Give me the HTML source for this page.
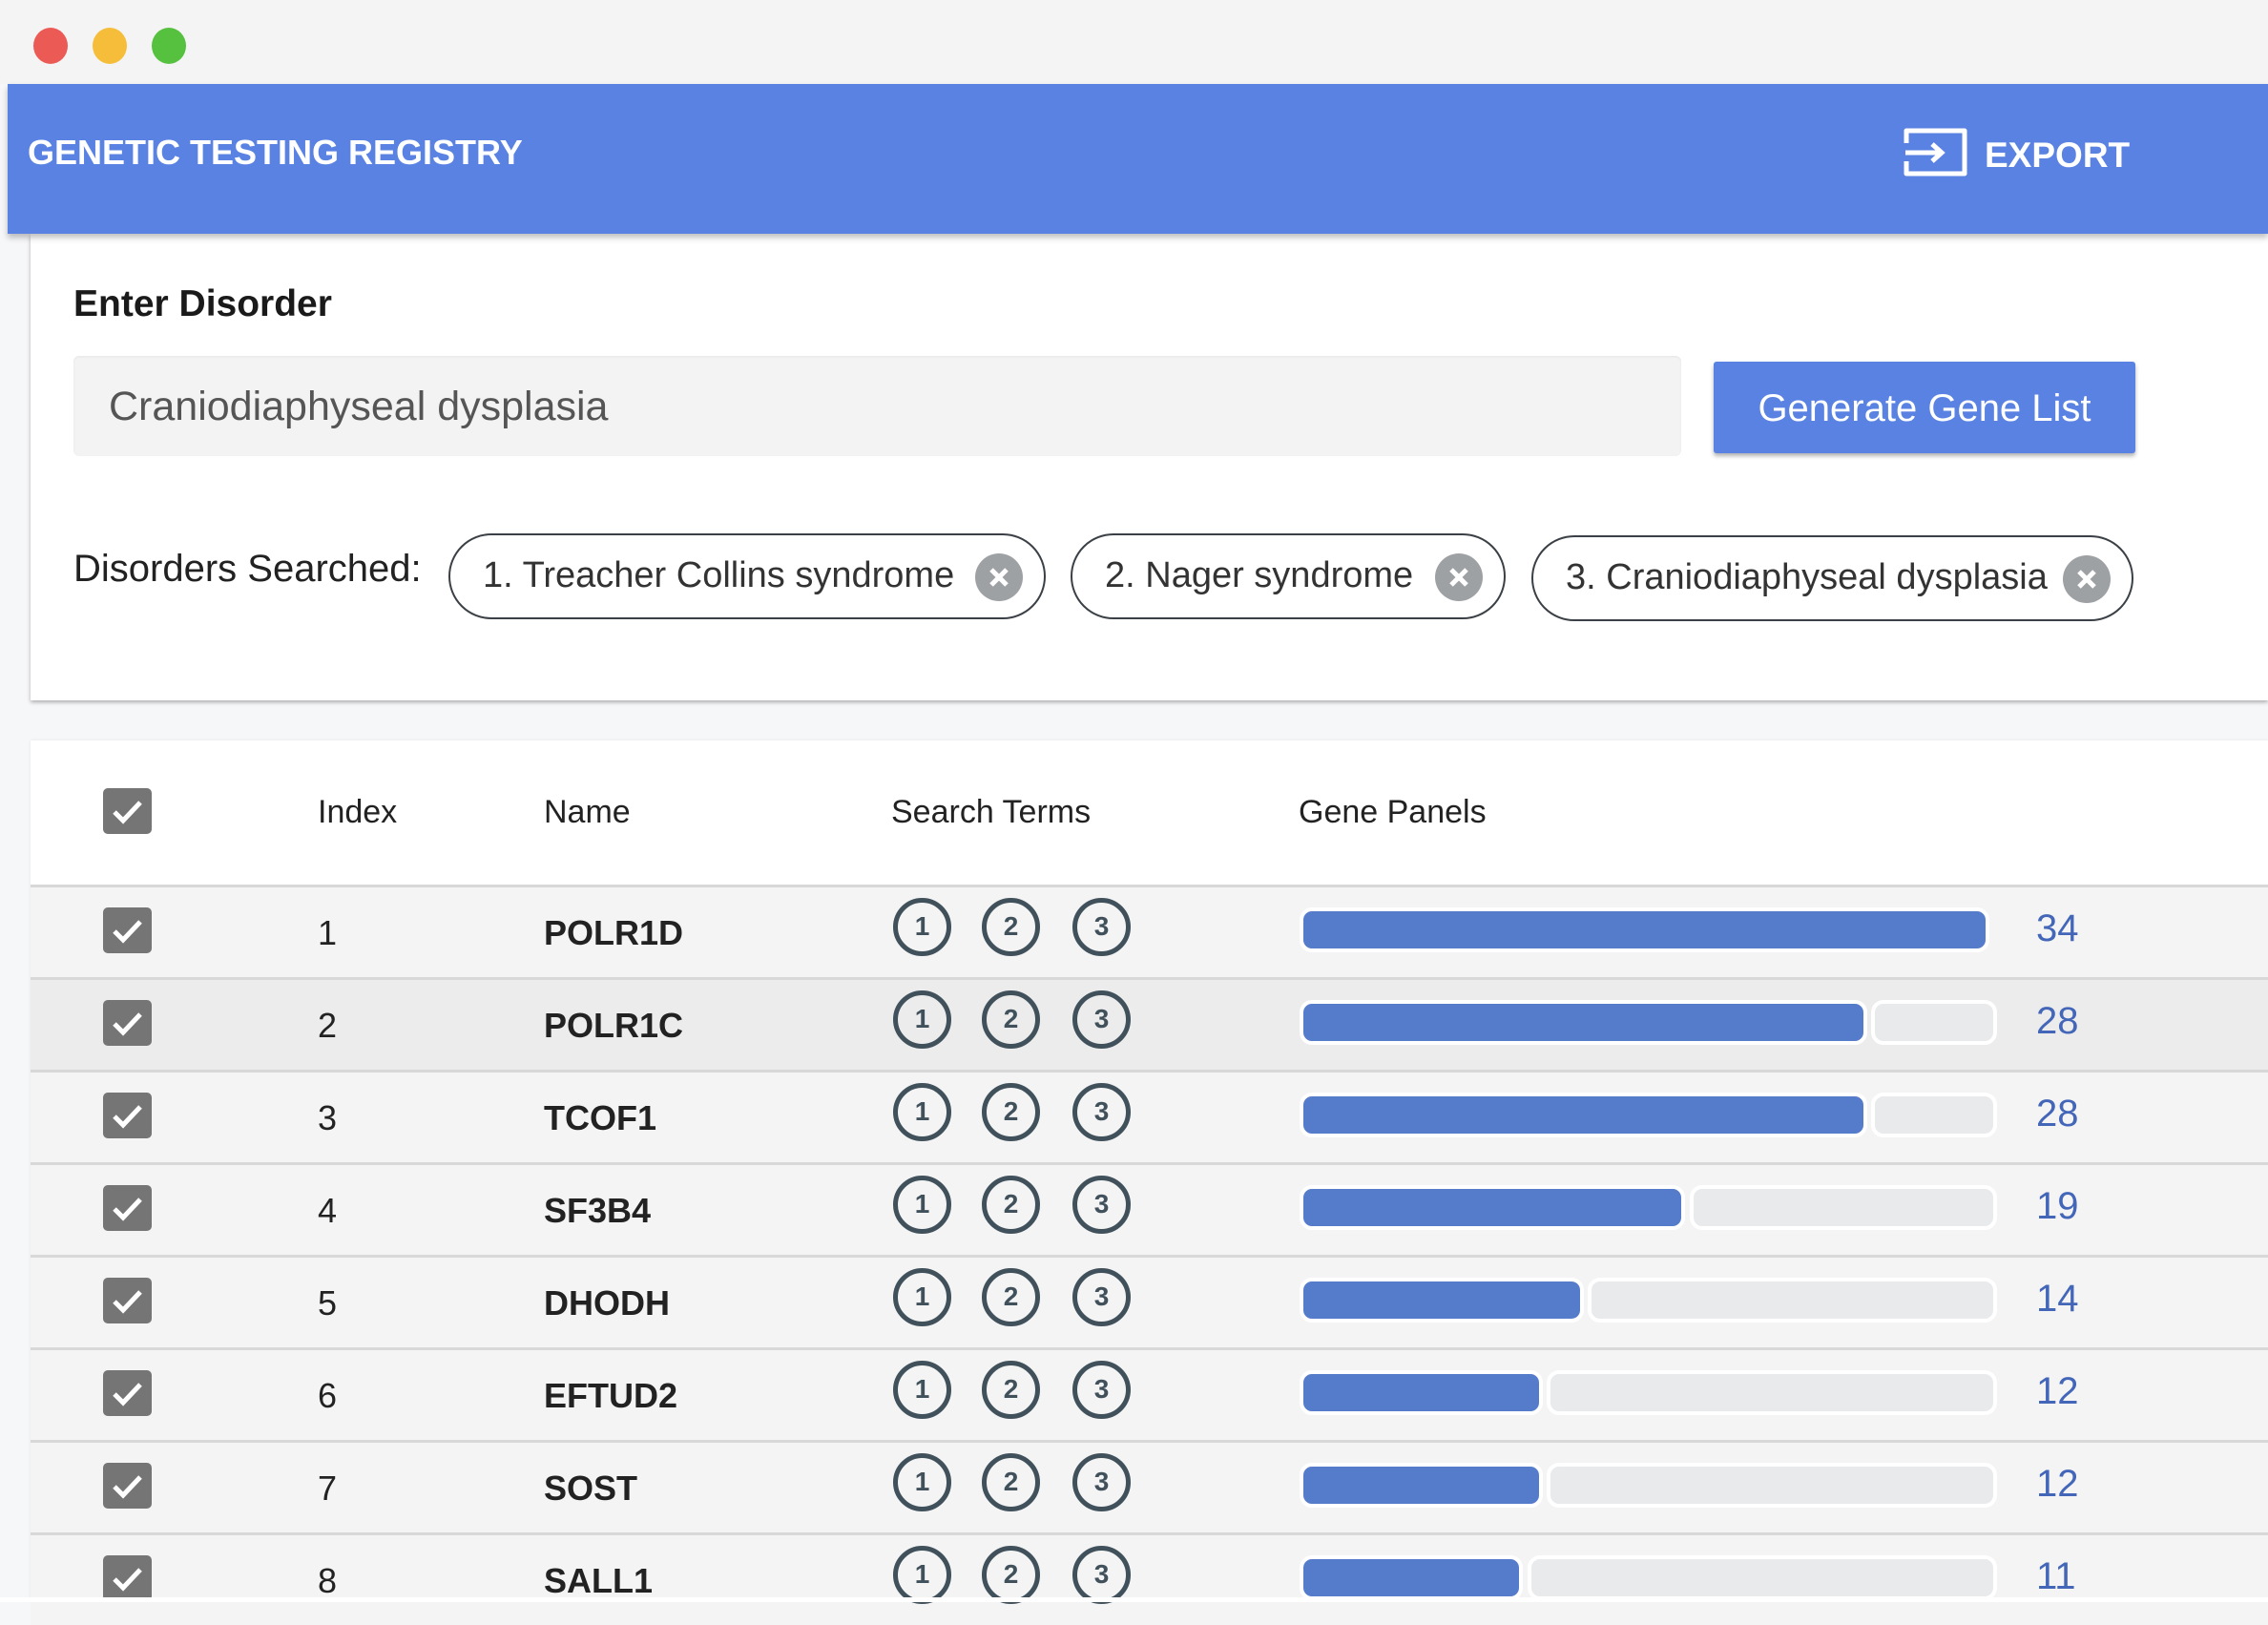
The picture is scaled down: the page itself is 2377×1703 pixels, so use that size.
<!DOCTYPE html>
<html><head><meta charset="utf-8"><style>
*{margin:0;padding:0;box-sizing:border-box}
body{width:2377px;height:1679px;overflow:hidden;background:#f6f7f9;font-family:"Liberation Sans",sans-serif;position:relative}
.a{position:absolute;line-height:1;white-space:nowrap}
.dot{position:absolute;width:36px;height:38px;border-radius:50%;top:29px}
.cb{position:absolute;left:108px;width:51px;height:48px;background:#757575;border-radius:5px}
.cb svg{position:absolute;left:9px;top:8px}
.row{position:absolute;left:32px;width:2345px;height:97px;background:#f4f4f4;border-top:3px solid #d8d8d8}
.fill{position:absolute;height:47px;top:21px;border:4px solid #fff;border-radius:13px;background:#557bcb}
.trk{position:absolute;height:47px;top:21px;border:4px solid #fff;border-radius:13px;background:#e9eaec}
.circ{position:absolute;width:61px;height:61px;border:5px solid #41515b;border-radius:50%;top:11px;font-weight:bold;font-size:28px;color:#41515b;text-align:center;line-height:50px}
.chip{position:absolute;top:559px;height:90px;border:2.5px solid #3a4046;border-radius:45px;background:#fff}
.chip span{position:absolute;left:34px;top:20px;font-size:38px;color:#333;line-height:1.2;white-space:nowrap}
.x{position:absolute;right:22px;top:19px;width:50px;height:50px;border-radius:50%;background:#9ea1a4}
</style></head><body>
<div style="position:absolute;left:0;top:0;width:2377px;height:88px;background:#f4f4f4"></div>
<div class="dot" style="left:35px;background:#ec5a55"></div>
<div class="dot" style="left:97px;background:#f5bd3a"></div>
<div class="dot" style="left:159px;background:#55c13f"></div>
<div style="position:absolute;left:8px;top:88px;width:2369px;height:157px;background:#5a82e2;box-shadow:0 4px 6px rgba(0,0,0,.25);z-index:3"></div>
<div class="a" style="left:29px;top:142px;font-size:36px;font-weight:bold;color:#fff;z-index:4">GENETIC TESTING REGISTRY</div>
<svg style="position:absolute;left:1995px;top:133px;z-index:4" width="68" height="52" viewBox="0 0 68 52"><path d="M3 17V4h61v45H3V36" fill="none" stroke="#fff" stroke-width="5" stroke-linejoin="round"/><path d="M2 27h36" stroke="#fff" stroke-width="5"/><path d="M30 18l10 9-10 9" fill="none" stroke="#fff" stroke-width="5"/></svg>
<div class="a" style="left:2080px;top:144px;font-size:37px;font-weight:bold;color:#fff;z-index:4">EXPORT</div>

<div style="position:absolute;left:32px;top:245px;width:2345px;height:489px;background:#fff;box-shadow:0 2px 4px rgba(0,0,0,.3)"></div>
<div class="a" style="left:77px;top:299px;font-size:39px;font-weight:bold;color:#1a1a1a">Enter Disorder</div>
<div style="position:absolute;left:77px;top:373px;width:1685px;height:105px;background:#f3f3f3;border-radius:6px;box-shadow:inset 0 1px 2px rgba(0,0,0,.06)"></div>
<div class="a" style="left:114px;top:405px;font-size:43px;color:#555">Craniodiaphyseal dysplasia</div>
<div style="position:absolute;left:1796px;top:379px;width:442px;height:96px;background:#5a82e2;border-radius:3px;box-shadow:0 3px 4px rgba(0,0,0,.3)"></div>
<div class="a" style="left:1796px;width:442px;text-align:center;top:408px;font-size:40px;color:#fff">Generate Gene List</div>
<div class="a" style="left:77px;top:576px;font-size:40px;color:#222">Disorders Searched:</div>
<div class="chip" style="left:470px;width:626px"><span>1. Treacher Collins syndrome</span><div class="x"><svg width="50" height="50"><path d="M17 17l16 16M33 17l-16 16" stroke="#fff" stroke-width="5"/></svg></div></div>
<div class="chip" style="left:1122px;width:456px"><span>2. Nager syndrome</span><div class="x"><svg width="50" height="50"><path d="M17 17l16 16M33 17l-16 16" stroke="#fff" stroke-width="5"/></svg></div></div>
<div class="chip" style="left:1605px;width:631px;top:561px"><span>3. Craniodiaphyseal dysplasia</span><div class="x"><svg width="50" height="50"><path d="M17 17l16 16M33 17l-16 16" stroke="#fff" stroke-width="5"/></svg></div></div>

<div style="position:absolute;left:32px;top:776px;width:2345px;height:903px;background:#fff;box-shadow:0 0 3px rgba(0,0,0,.08)"></div>
<div class="cb" style="top:826px"><svg width="33" height="32"><path d="M3 17l9 9L30 7" fill="none" stroke="#fff" stroke-width="5"/></svg></div>
<div class="a" style="left:333px;top:834px;font-size:34px;color:#222">Index</div>
<div class="a" style="left:570px;top:834px;font-size:34px;color:#222">Name</div>
<div class="a" style="left:934px;top:834px;font-size:34px;color:#222">Search Terms</div>
<div class="a" style="left:1361px;top:834px;font-size:34px;color:#222">Gene Panels</div>

<div class="row" style="top:927px"><div class="cb" style="left:76px;top:21px"><svg width="33" height="32"><path d="M3 17l9 9L30 7" fill="none" stroke="#fff" stroke-width="5"/></svg></div><div class="a" style="left:301px;top:30px;font-size:36px;color:#222">1</div><div class="a" style="left:538px;top:30px;font-size:36px;font-weight:bold;color:#222">POLR1D</div><div class="circ" style="left:904px">1</div><div class="circ" style="left:997px">2</div><div class="circ" style="left:1092px">3</div><div class="fill" style="left:1330px;width:723px"></div><div class="a" style="left:2102px;top:23px;font-size:40px;color:#4366b8">34</div></div>

<div class="row" style="top:1024px;background:#ececec"><div class="cb" style="left:76px;top:21px"><svg width="33" height="32"><path d="M3 17l9 9L30 7" fill="none" stroke="#fff" stroke-width="5"/></svg></div><div class="a" style="left:301px;top:30px;font-size:36px;color:#222">2</div><div class="a" style="left:538px;top:30px;font-size:36px;font-weight:bold;color:#222">POLR1C</div><div class="circ" style="left:904px">1</div><div class="circ" style="left:997px">2</div><div class="circ" style="left:1092px">3</div><div class="fill" style="left:1330px;width:595px"></div><div class="trk" style="left:1929px;width:132px"></div><div class="a" style="left:2102px;top:23px;font-size:40px;color:#4366b8">28</div></div>

<div class="row" style="top:1121px"><div class="cb" style="left:76px;top:21px"><svg width="33" height="32"><path d="M3 17l9 9L30 7" fill="none" stroke="#fff" stroke-width="5"/></svg></div><div class="a" style="left:301px;top:30px;font-size:36px;color:#222">3</div><div class="a" style="left:538px;top:30px;font-size:36px;font-weight:bold;color:#222">TCOF1</div><div class="circ" style="left:904px">1</div><div class="circ" style="left:997px">2</div><div class="circ" style="left:1092px">3</div><div class="fill" style="left:1330px;width:595px"></div><div class="trk" style="left:1929px;width:132px"></div><div class="a" style="left:2102px;top:23px;font-size:40px;color:#4366b8">28</div></div>

<div class="row" style="top:1218px"><div class="cb" style="left:76px;top:21px"><svg width="33" height="32"><path d="M3 17l9 9L30 7" fill="none" stroke="#fff" stroke-width="5"/></svg></div><div class="a" style="left:301px;top:30px;font-size:36px;color:#222">4</div><div class="a" style="left:538px;top:30px;font-size:36px;font-weight:bold;color:#222">SF3B4</div><div class="circ" style="left:904px">1</div><div class="circ" style="left:997px">2</div><div class="circ" style="left:1092px">3</div><div class="fill" style="left:1330px;width:404px"></div><div class="trk" style="left:1739px;width:322px"></div><div class="a" style="left:2102px;top:23px;font-size:40px;color:#4366b8">19</div></div>

<div class="row" style="top:1315px"><div class="cb" style="left:76px;top:21px"><svg width="33" height="32"><path d="M3 17l9 9L30 7" fill="none" stroke="#fff" stroke-width="5"/></svg></div><div class="a" style="left:301px;top:30px;font-size:36px;color:#222">5</div><div class="a" style="left:538px;top:30px;font-size:36px;font-weight:bold;color:#222">DHODH</div><div class="circ" style="left:904px">1</div><div class="circ" style="left:997px">2</div><div class="circ" style="left:1092px">3</div><div class="fill" style="left:1330px;width:298px"></div><div class="trk" style="left:1632px;width:429px"></div><div class="a" style="left:2102px;top:23px;font-size:40px;color:#4366b8">14</div></div>

<div class="row" style="top:1412px"><div class="cb" style="left:76px;top:21px"><svg width="33" height="32"><path d="M3 17l9 9L30 7" fill="none" stroke="#fff" stroke-width="5"/></svg></div><div class="a" style="left:301px;top:30px;font-size:36px;color:#222">6</div><div class="a" style="left:538px;top:30px;font-size:36px;font-weight:bold;color:#222">EFTUD2</div><div class="circ" style="left:904px">1</div><div class="circ" style="left:997px">2</div><div class="circ" style="left:1092px">3</div><div class="fill" style="left:1330px;width:255px"></div><div class="trk" style="left:1589px;width:472px"></div><div class="a" style="left:2102px;top:23px;font-size:40px;color:#4366b8">12</div></div>

<div class="row" style="top:1509px"><div class="cb" style="left:76px;top:21px"><svg width="33" height="32"><path d="M3 17l9 9L30 7" fill="none" stroke="#fff" stroke-width="5"/></svg></div><div class="a" style="left:301px;top:30px;font-size:36px;color:#222">7</div><div class="a" style="left:538px;top:30px;font-size:36px;font-weight:bold;color:#222">SOST</div><div class="circ" style="left:904px">1</div><div class="circ" style="left:997px">2</div><div class="circ" style="left:1092px">3</div><div class="fill" style="left:1330px;width:255px"></div><div class="trk" style="left:1589px;width:472px"></div><div class="a" style="left:2102px;top:23px;font-size:40px;color:#4366b8">12</div></div>

<div class="row" style="top:1606px"><div class="cb" style="left:76px;top:21px"><svg width="33" height="32"><path d="M3 17l9 9L30 7" fill="none" stroke="#fff" stroke-width="5"/></svg></div><div class="a" style="left:301px;top:30px;font-size:36px;color:#222">8</div><div class="a" style="left:538px;top:30px;font-size:36px;font-weight:bold;color:#222">SALL1</div><div class="circ" style="left:904px">1</div><div class="circ" style="left:997px">2</div><div class="circ" style="left:1092px">3</div><div class="fill" style="left:1330px;width:234px"></div><div class="trk" style="left:1569px;width:492px"></div><div class="a" style="left:2102px;top:23px;font-size:40px;color:#4366b8">11</div></div>
<div style="position:absolute;left:0;top:1674px;width:2377px;height:5px;background:#fff"></div>
</body></html>
